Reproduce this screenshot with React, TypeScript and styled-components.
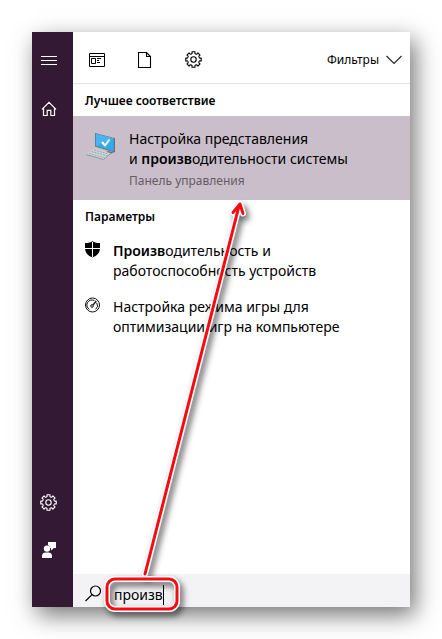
import React from "react";
import styled, { createGlobalStyle } from "styled-components";

const GlobalStyle = createGlobalStyle`
  *, *::before, *::after { box-sizing: border-box; }
  body {
    margin: 0;
    background: #fff;
    color: #000;
    font-family: "Noto Sans", "Open Sans", sans-serif;
  }
  button, input { font: inherit; color: inherit; }
  svg { display: block; }
`;

const Page = styled.div`
  min-height: 100vh;
  padding: 32px;
  display: flex;
`;

const SearchWindow = styled.main`
  position: relative;
  flex: 1;
  min-width: 0;
  display: flex;
  background: #fff;
  box-shadow: 5px 8px 22px rgba(0, 0, 0, 0.55);
`;

const Sidebar = styled.nav`
  flex: none;
  width: 41px;
  padding: 17px 8px 45px 0;
  display: flex;
  flex-direction: column;
  justify-content: space-between;
  background: #331933;
  color: #fff;
`;

const SidebarGroup = styled.div`
  display: flex;
  flex-direction: column;
  align-items: center;
  gap: 24px;
`;

const IconButton = styled.button`
  width: 24px;
  height: 24px;
  padding: 0;
  border: 0;
  background: none;
  display: grid;
  place-items: center;
  cursor: pointer;
`;

const Content = styled.div`
  flex: 1;
  min-width: 0;
  display: flex;
  flex-direction: column;
`;

const Toolbar = styled.header`
  height: 52px;
  padding: 4px 8px 0 12px;
  display: flex;
  align-items: center;
  justify-content: space-between;
  border-bottom: 1px solid #e2e2e2;
`;

const Categories = styled.div`
  display: flex;
  gap: 24px;
`;

const FilterButton = styled.button`
  padding: 0;
  border: 0;
  background: none;
  display: flex;
  align-items: center;
  gap: 7px;
  font-size: 12px;
  line-height: 20px;
  cursor: pointer;
`;

const SectionTitle = styled.h2`
  margin: 0;
  padding: 2px 12px 0;
  font-size: 12px;
  font-weight: 600;
  line-height: 30px;
`;

const Results = styled.div`
  flex: 1;
`;

const Result = styled.a<{ $best?: boolean }>`
  display: flex;
  align-items: flex-start;
  gap: ${(p) => (p.$best ? 12 : 13)}px;
  padding: ${(p) => (p.$best ? "12px 12px 9px" : "8px 12px 7px")};
  background: ${(p) => (p.$best ? "#cabeca" : "transparent")};
  color: inherit;
  text-decoration: none;
`;

const ResultIcon = styled.span`
  flex: none;
  padding-top: 1px;
`;

const ResultText = styled.span`
  min-width: 0;
  padding-top: 1px;
  font-size: 14px;
  line-height: 20px;
`;

const ResultLine = styled.span`
  display: block;
`;

const Match = styled.b`
  font-weight: 600;
`;

const Caption = styled.span`
  display: block;
  padding-top: 2px;
  font-size: 12px;
  line-height: 20px;
  color: #665c66;
`;

const SearchBar = styled.label`
  height: 33px;
  padding: 8px 12px 0;
  display: flex;
  align-items: center;
  gap: 12px;
  background: #f3f2f5;
`;

const Query = styled.span`
  display: flex;
  align-items: center;
`;

const SearchInput = styled.input`
  field-sizing: content;
  padding: 0;
  border: 0;
  outline: 0;
  background: none;
  font-size: 14px;
  line-height: 20px;
`;

const Caret = styled.span`
  width: 1px;
  height: 20px;
  background: #000;
`;

const Annotation = styled.svg`
  position: absolute;
  left: 64px;
  bottom: -4px;
  overflow: visible;
  pointer-events: none;
  filter: drop-shadow(3px 4px 3px rgba(0, 0, 0, 0.6));
`;

const gearOutline = (() => {
  const points: string[] = [];
  for (let i = 0; i < 8; i++) {
    const at = (r: number, deg: number) => {
      const a = ((i * 45 + deg) * Math.PI) / 180;
      return `${(8.5 + r * Math.sin(a)).toFixed(2)} ${(8.5 - r * Math.cos(a)).toFixed(2)}`;
    };
    points.push(
      `${i ? "L" : "M"}${at(7.9, -11)}L${at(7.9, 11)}L${at(6.3, 13)}Q${at(5.6, 22.5)} ${at(6.3, 32)}`,
    );
  }
  return points.join("") + "Z";
})();

const Gear = () => (
  <svg width="17" height="17" fill="none" stroke="currentColor" strokeWidth="1.1">
    <path d={gearOutline} strokeLinejoin="round" />
    <circle cx="8.5" cy="8.5" r="2.7" />
  </svg>
);

const MenuIcon = () => (
  <svg width="16" height="10" fill="currentColor">
    <path d="M0 0h16v1H0zM0 4h16v1H0zM0 8h16v1H0z" />
  </svg>
);

const HomeIcon = () => (
  <svg width="16" height="16" fill="none" stroke="currentColor" strokeWidth="1.2">
    <path d="M1 8.3 8 1.3l7 7M2.5 7v7.5h3.7V9.3h3.6v5.2h3.7V7" />
  </svg>
);

const FeedbackIcon = () => (
  <svg width="16" height="18" fill="currentColor">
    <path d="M7 1h8v6h-2l-3 2.6V7H9a4 4 0 0 0-2-3z" />
    <circle cx="6" cy="7.6" r="3.2" />
    <path d="M1 17v-2c0-2.4 1.6-3.5 3.6-3.5h2.8c2 0 3.6 1.1 3.6 3.5v2z" />
  </svg>
);

const AppsIcon = () => (
  <svg width="16" height="14" fill="none" stroke="currentColor">
    <path d="M.5 .5v13h15V.5zM0 3.5h16M2.5 5.5h4v5h-4zM8 5.5h4M8 7.5h2M8 9.5h3" />
  </svg>
);

const DocumentIcon = () => (
  <svg width="14" height="16" fill="none" stroke="currentColor">
    <path d="M.5.5h8l4 4v11H.5zM8.5.5v4h4" strokeWidth="1.1" />
  </svg>
);

const ChevronIcon = () => (
  <svg width="16" height="10" fill="none" stroke="#222" strokeWidth="1.1">
    <path d="m.5 1 7.5 7.5L15.5 1" />
  </svg>
);

const ComputerIcon = () => (
  <svg width="32" height="32">
    <path d="m10 4 20 5.2v14.2L10 17.5z" fill="#607078" />
    <path d="m10.8 4.8 18 4.8v12.7l-18-5.4z" fill="#35a9ec" />
    <path d="m10.8 4.8 18 4.8-18 7.3z" fill="#4ab4f0" />
    <path d="m17 13 3 3.5 4.5-6" fill="none" stroke="#fff" strokeWidth="2" />
    <path d="m29 23.5-7 2.5-4-1 5-3z" fill="#65737a" />
    <path d="m1 25.5 8.5-6 16.5 4.7-7.5 6.3z" fill="#ccd5d8" />
    <path d="m1 25.5 17.5 5 7.5-6.3" fill="none" stroke="#8a979d" />
    <path
      d="m4 24.3 15.5 4.5M6.5 22.5l15.5 4.3M9 21l14.5 4"
      fill="none"
      stroke="#9aa5aa"
      strokeDasharray="2 1"
    />
  </svg>
);

const ShieldIcon = () => (
  <svg width="15" height="17">
    <path
      d="M7.5 0C6 1.5 3 2.1 0 2v5c0 5 3 7.7 7.5 9.5C12 14.7 15 12 15 7V2c-3 .1-6-.5-7.5-2z"
      fill="#000"
    />
    <path d="M7.5 1v15M0 7.5h15" stroke="#fff" />
  </svg>
);

const GaugeIcon = () => (
  <svg width="15" height="17" fill="none" stroke="#111">
    <circle cx="7.5" cy="8" r="7" />
    <path d="M4.3 12.3A5 5 0 0 1 9.5 3.7M11.7 5.8a5 5 0 0 1-1 6.5" />
    <circle cx="7" cy="9" r="1.3" />
    <path d="m8 8 3.3-4" strokeWidth="1.3" />
  </svg>
);

const SearchIcon = () => (
  <svg width="17" height="19" fill="none" stroke="currentColor" strokeWidth="1.2">
    <circle cx="10.5" cy="6" r="5" />
    <path d="M7 9.6.5 16" />
  </svg>
);

const arrowLine = "M49 391 143 23";
const arrowHead = "m137 29.5 7-8.5 3 9.5";

const Callout = () => (
  <Annotation width="168" height="428" fill="none" aria-hidden="true">
    <g strokeLinecap="round" strokeLinejoin="round">
      <g stroke="#fff" strokeWidth="6">
        <path d={arrowLine} />
        <path d={arrowHead} />
        <rect x="11" y="396" width="70" height="30" rx="8" />
      </g>
      <g stroke="#f50b12" strokeWidth="3">
        <path d={arrowLine} />
        <path d={arrowHead} />
        <rect x="11" y="396" width="70" height="30" rx="8" />
      </g>
    </g>
  </Annotation>
);

export default function App() {
  return (
    <Page>
      <GlobalStyle />
      <SearchWindow>
        <Sidebar>
          <SidebarGroup>
            <IconButton aria-label="Меню"><MenuIcon /></IconButton>
            <IconButton aria-label="Главная"><HomeIcon /></IconButton>
          </SidebarGroup>
          <SidebarGroup>
            <IconButton aria-label="Настройки"><Gear /></IconButton>
            <IconButton aria-label="Отзывы"><FeedbackIcon /></IconButton>
          </SidebarGroup>
        </Sidebar>
        <Content>
          <Toolbar>
            <Categories>
              <IconButton aria-label="Приложения"><AppsIcon /></IconButton>
              <IconButton aria-label="Документы"><DocumentIcon /></IconButton>
              <IconButton aria-label="Параметры"><Gear /></IconButton>
            </Categories>
            <FilterButton>
              Фильтры
              <ChevronIcon />
            </FilterButton>
          </Toolbar>
          <Results>
            <SectionTitle>Лучшее соответствие</SectionTitle>
            <Result $best href="#system">
              <ResultIcon><ComputerIcon /></ResultIcon>
              <ResultText>
                <ResultLine>Настройка представления</ResultLine>
                <ResultLine>и <Match>произв</Match>одительности системы</ResultLine>
                <Caption>Панель управления</Caption>
              </ResultText>
            </Result>
            <SectionTitle>Параметры</SectionTitle>
            <Result href="#health">
              <ResultIcon><ShieldIcon /></ResultIcon>
              <ResultText>
                <ResultLine><Match>Произв</Match>одительность и</ResultLine>
                <ResultLine>работоспособность устройств</ResultLine>
              </ResultText>
            </Result>
            <Result href="#game">
              <ResultIcon><GaugeIcon /></ResultIcon>
              <ResultText>
                <ResultLine>Настройка режима игры для</ResultLine>
                <ResultLine>оптимизации игр на компьютере</ResultLine>
              </ResultText>
            </Result>
          </Results>
          <SearchBar>
            <SearchIcon />
            <Query>
              <SearchInput type="text" aria-label="Поиск" defaultValue="произв" />
              <Caret />
            </Query>
          </SearchBar>
        </Content>
        <Callout />
      </SearchWindow>
    </Page>
  );
}
